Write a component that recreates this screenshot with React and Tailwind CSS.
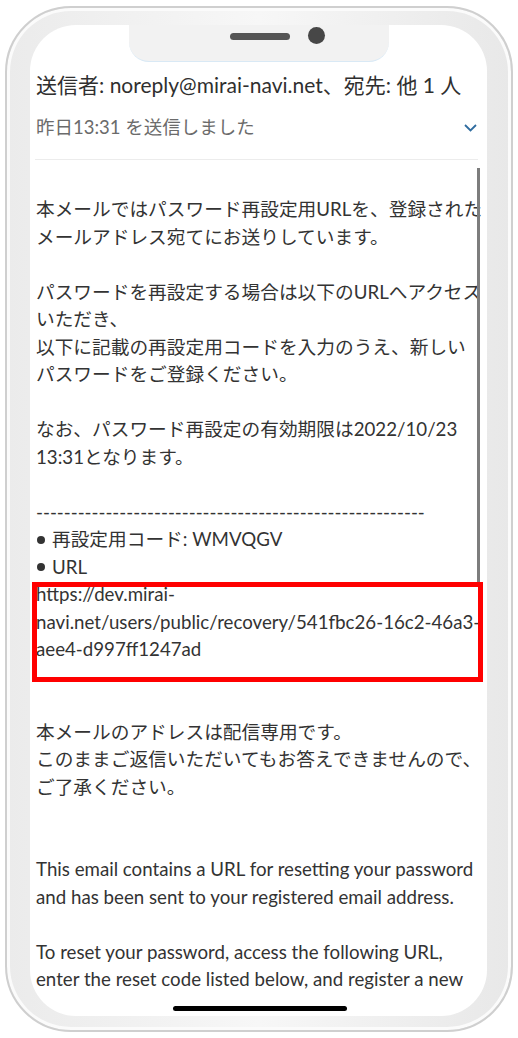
import React from "react";

const lines = [
  "本メールではパスワード再設定用URLを、登録された",
  "メールアドレス宛てにお送りしています。",
  "",
  "パスワードを再設定する場合は以下のURLへアクセス",
  "いただき、",
  "以下に記載の再設定用コードを入力のうえ、新しい",
  "パスワードをご登録ください。",
  "",
  "なお、パスワード再設定の有効期限は2022/10/23",
  "13:31となります。",
  "",
  "--------------------------------------------------------",
  "BULLET:再設定用コード: WMVQGV",
  "BULLET:URL",
  "https://dev.mirai-",
  "navi.net/users/public/recovery/541fbc26-16c2-46a3-",
  "aee4-d997ff1247ad",
  "",
  "",
  "本メールのアドレスは配信専用です。",
  "このままご返信いただいてもお答えできませんので、",
  "ご了承ください。",
  "",
  "",
  "This email contains a URL for resetting your password",
  "and has been sent to your registered email address.",
  "",
  "To reset your password, access the following URL,",
  "enter the reset code listed below, and register a new",
];

function Line({ text }) {
  if (text === "") return <div className="h-[27.5px]" />;
  if (text.startsWith("BULLET:")) {
    return (
      <div className="h-[27.5px] whitespace-nowrap flex items-center">
        <span className="w-[8px] h-[8px] rounded-full bg-[#333] ml-[1px] mr-[7px]" />
        <span>{text.slice(7)}</span>
      </div>
    );
  }
  return <div className="h-[27.5px] whitespace-nowrap">{text}</div>;
}

export default function App() {
  return (
    <div className="w-[518px] h-[1038px] bg-white overflow-hidden pt-[6px] pl-[5px] font-['Lato','Noto_Sans_CJK_JP',sans-serif]">
      <div className="w-[508px] h-[1026px] rounded-[66px] border-2 border-[#cfcfcf] bg-gradient-to-r from-[#ebebeb] via-[#f7f7f7] to-[#e8e8e8] shadow-[inset_0_0_0_3px_#fbfbfb] pt-[17px] pl-[23px]">
        <div className="relative w-[457px] h-[991px] rounded-[46px] bg-white overflow-hidden">
          {/* notch */}
          <div className="flex justify-center">
            <div className="w-[260px] h-[37px] bg-[#f2f2f2] rounded-b-[20px] border-b border-[#d9e9f5] flex items-start gap-[18px] pl-[101px]">
              <div className="mt-[8px] w-[60px] h-[7px] rounded-full bg-[#555]" />
              <div className="mt-[2px] w-[17px] h-[17px] rounded-full bg-[#474747]" />
            </div>
          </div>

          <div className="pt-[9px] pl-[6px] pr-[9px] text-[#333]">
            <div className="text-[21px] leading-[28px] whitespace-nowrap text-[#2f2f2f]">
              送信者: noreply@mirai-navi.net、宛先: 他 1 人
            </div>
            <div className="mt-[17px] h-[24px] flex items-center justify-between text-[18.5px] text-[#6b6b6b]">
              <span className="whitespace-nowrap">昨日13:31 を送信しました</span>
              <svg width="13" height="8" viewBox="0 0 13 8" className="mr-[1px]">
                <path d="M1 1 L6.5 6.5 L12 1" fill="none" stroke="#2f6c9f" strokeWidth="1.8" />
              </svg>
            </div>
            <div className="mt-[19px] ml-[-1px] h-px bg-[#ececec]" />
            <div className="mt-[36px] text-[18.7px] leading-[27.5px]">
              {lines.map((t, i) => (
                <Line key={i} text={t} />
              ))}
            </div>
          </div>

          {/* scrollbar */}
          <div className="absolute left-[447px] top-[143px] w-[3px] h-[414px] bg-[#7d7d7d]" />
          {/* highlight box */}
          <div className="absolute left-[2px] top-[557px] w-[451px] h-[100px] border-[5px] border-[#f00]" />
          {/* home indicator */}
          <div className="absolute left-[143px] top-[981px] w-[174px] h-[5px] rounded-full bg-black" />
        </div>
      </div>
    </div>
  );
}
